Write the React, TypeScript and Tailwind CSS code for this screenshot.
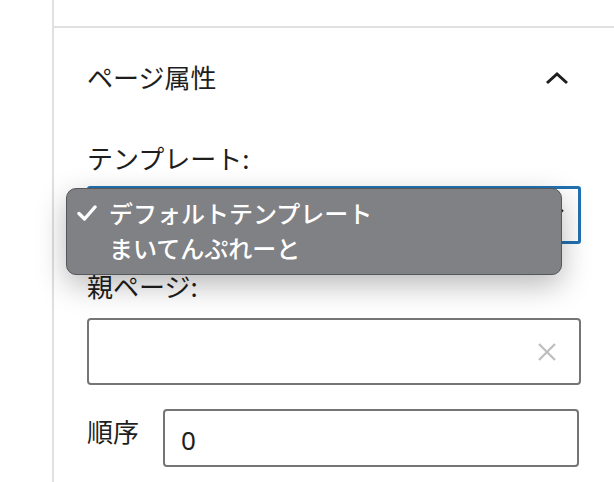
import React from "react";

const jp = { fontFamily: '"Noto Sans CJK JP", "Noto Sans", sans-serif' };

export default function App() {
  return (
    <div
      className="w-[614px] h-[482px] bg-white flex overflow-hidden text-[#1e1e1e]"
      style={jp}
    >
      <div className="w-[52px] shrink-0" />
      <div className="flex-1 border-l-2 border-[#e0e0e0] flex flex-col">
        <div className="h-[26px] shrink-0" />
        <div className="border-t-2 border-[#e0e0e0] px-[33px]">
          <div className="h-[98px] flex items-center justify-between">
            <span className="text-[26px] leading-[32px]">ページ属性</span>
            <svg width="24" height="14" viewBox="0 0 24 14" className="mr-[12px] mt-[2px]">
              <polyline points="2,12 12,3 22,12" fill="none" stroke="#1e1e1e" strokeWidth="3" />
            </svg>
          </div>
          <div className="mt-[16px] h-[32px] text-[26px] leading-[32px]">テンプレート:</div>
          <div className="relative mt-[12px] h-[58px] border-[3px] border-[#2271b1] rounded-[3px]">
            <svg width="14" height="10" viewBox="0 0 14 10" className="absolute right-[14px] top-[19px]">
              <polyline points="1,2 7,8 13,2" fill="none" stroke="#1e1e1e" strokeWidth="2" />
            </svg>
            <div className="absolute left-[-24px] top-[-1px] w-[496px] h-[87px] rounded-[10px] bg-[#7f8184] border border-[#55575a] shadow-[0_10px_30px_rgba(0,0,0,0.28)] pt-[6px] text-white text-[24px] font-medium">
              <div className="h-[35px] flex items-center">
                <div className="w-[42px] flex justify-end pr-[12px]">
                  <svg width="20" height="16" viewBox="0 0 20 16">
                    <polyline points="2,8.5 7.5,14 18,2" fill="none" stroke="#ffffff" strokeWidth="3.4" strokeLinecap="round" strokeLinejoin="round" />
                  </svg>
                </div>
                <span className="leading-[35px]">デフォルトテンプレート</span>
              </div>
              <div className="h-[35px] flex items-center pl-[42px]">
                <span className="leading-[35px]">まいてんぷれーと</span>
              </div>
            </div>
          </div>
          <div className="mt-[26px] h-[32px] text-[26px] leading-[32px]">親ページ:</div>
          <div className="mt-[16px] h-[67px] border-2 border-[#757575] rounded-[4px] flex items-center justify-end pr-[22px]">
            <svg width="20" height="20" viewBox="0 0 20 20">
              <path d="M2 2 L18 18 M18 2 L2 18" stroke="#bdbdbd" strokeWidth="2.2" fill="none" />
            </svg>
          </div>
          <div className="mt-[24px] flex items-start">
            <div className="w-[76px] shrink-0 mt-[6px] text-[26px] leading-[32px]">順序</div>
            <div className="flex-1 mr-[2px] h-[58px] border-2 border-[#757575] rounded-[4px] flex items-center pl-[16px] text-[26px]">
              <span style={{ fontFamily: '"Noto Sans", sans-serif' }} className="mt-[4px]">0</span>
            </div>
          </div>
        </div>
      </div>
    </div>
  );
}
